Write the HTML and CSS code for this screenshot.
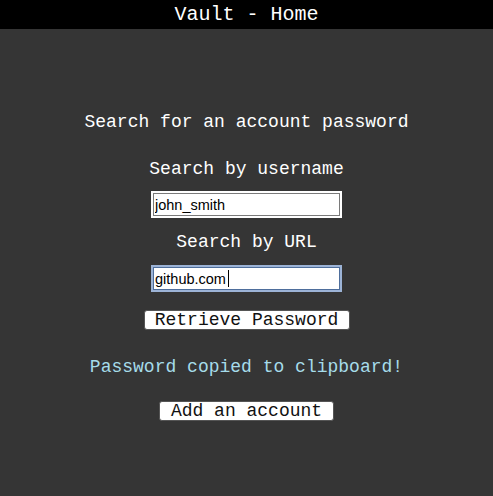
FILE: index.html
```html
<!DOCTYPE html>
<html>
<head>
<meta charset="utf-8">
<title>Vault - Home</title>
<link rel="stylesheet" href="styles.css">
</head>
<body>
<header class="topbar">Vault - Home</header>
<main class="content">
  <h2 class="title">Search for an account password</h2>
  <label class="label" for="user">Search by username</label>
  <div class="field"><input id="user" class="input" type="text" value="john_smith"></div>
  <label class="label label-url" for="url">Search by URL</label>
  <div class="field field-url"><input id="url" class="input input-focus" type="text" value="github.com"><span class="caret"></span></div>
  <button class="btn btn-retrieve">Retrieve Password</button>
  <p class="message">Password copied to clipboard!</p>
  <button class="btn btn-add">Add an account</button>
</main>
</body>
</html>
```
FILE: styles.css
```css
html, body {
  margin: 0;
  padding: 0;
}
body {
  background: #353535;
  font-family: "Liberation Mono", "Courier New", monospace;
  color: #ffffff;
  height: 496px;
}
.topbar {
  background: #000;
  color: #fff;
  height: 29px;
  line-height: 29px;
  font-size: 20px;
  text-align: center;
}
.content {
  display: flex;
  flex-direction: column;
  align-items: center;
}
.title {
  margin: 82px 0 0;
  font-size: 18px;
  font-weight: normal;
  line-height: 22px;
}
.label {
  margin-top: 25px;
  font-size: 18px;
  line-height: 22px;
}
.label-url {
  margin-top: 13px;
}
.field {
  position: relative;
  margin-top: 11px;
}
.field-url {
  margin-top: 12px;
}
.input {
  box-sizing: border-box;
  width: 187px;
  height: 23px;
  margin: 2px;
  border: 1px solid #7a7a7a;
  box-shadow: 0 0 0 2px #ffffff;
  background: #fff;
  font-family: "Liberation Sans", Arial, sans-serif;
  font-size: 14.5px;
  color: #000;
  padding: 0 0 0 1px;
  outline: none;
  display: block;
}
.input-focus {
  border: 1px solid #4e6e9c;
  box-shadow: 0 0 0 2px #9cb3d6;
}
.caret {
  position: absolute;
  left: 77px;
  top: 5px;
  width: 1px;
  height: 17px;
  background: #000;
}
.btn {
  box-sizing: border-box;
  background: #fff;
  border: 1px solid #555;
  border-radius: 3px;
  font-family: "Liberation Mono", "Courier New", monospace;
  font-size: 18px;
  line-height: 18px;
  height: 20px;
  color: #111;
  padding: 0 10px;
}
.btn-retrieve {
  margin-top: 18px;
  width: 206px;
}
.btn-add {
  margin-top: 23px;
  width: 175px;
}
.message {
  margin: 26px 0 0;
  font-size: 18px;
  line-height: 22px;
  color: #a6dcea;
}
```
